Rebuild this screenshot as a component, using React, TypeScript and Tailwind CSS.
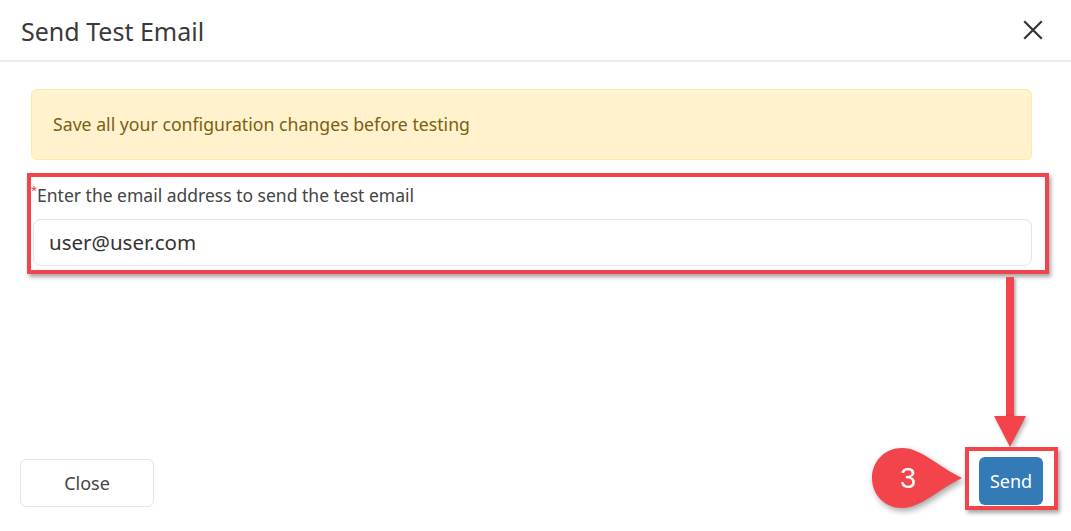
import React from 'react';

const RED = '#f2444a';

function Badge() {
    // teardrop pointing right, like the annotation callouts
    return (
        <svg width="96" height="66" viewBox="0 0 96 66" className="absolute left-[869px] top-[445px] drop-shadow-[2px_3px_3px_rgba(0,0,0,0.35)]">
            <path d="M33 3 C16 3 3 16 3 33 C3 50 16 63 33 63 C52 63 70 44 93 33 C70 22 52 3 33 3 Z" fill={RED}/>
            <text x="39" y="43" textAnchor="middle" fill="#fff" fontSize="29" fontFamily="Liberation Sans, Arial, sans-serif">3</text>
        </svg>
    );
}

export default function App() {
    return (
        <div className="relative w-[1071px] h-[531px] overflow-hidden bg-white text-[#333] font-['Noto_Sans',sans-serif]">
            <div className="flex h-[62px] items-center justify-between border-b-2 border-[#ebebeb] pl-[21px] pr-[28px]">
                <h1 className="text-[25px] leading-none pt-[2px] text-[#3a3a3a]">Send Test Email</h1>
                <button className="text-[#333]">
                    <svg width="20" height="20" viewBox="0 0 20 20" stroke="currentColor" strokeWidth="2.2" strokeLinecap="square">
                        <path d="M2 2 L18 18 M18 2 L2 18"/>
                    </svg>
                </button>
            </div>

            <div className="flex flex-col pl-[31px] pr-[39px] pt-[27px]">
                <div className="flex h-[71px] items-center rounded-md border border-[#fde9a8] bg-[#fff2cd] px-[21px] text-[17.7px] text-[#7d5f12]">
                    Save all your configuration changes before testing
                </div>

                <label className="mt-[23px] flex text-[17.5px] leading-[24px] text-[#444]">
                    <span className="text-[11px] leading-[14px] text-[#e23b3b]">*</span>
                    Enter the email address to send the test email
                </label>
                <div className="ml-[2px] mt-[12px] flex h-[47px] items-center rounded-lg border border-[#e4e4e4] px-[15px] text-[20.5px] text-[#333]">
                    user@user.com
                </div>
            </div>

            <div className="absolute bottom-[24px] left-[20px] right-[28px] flex items-end justify-between">
                <button className="h-[48px] w-[134px] rounded-md border border-[#e3e3e3] bg-white text-[18px] text-[#444]">Close</button>
                <button className="mb-[2px] h-[48px] w-[64px] rounded-md bg-[#337ab7] text-[18px] text-white">Send</button>
            </div>

            {/* annotations */}
            <div className="absolute left-[27px] top-[173px] h-[101px] w-[1022px] border-4 border-[#f2444a] shadow-[2px_3px_4px_rgba(0,0,0,0.35)]"/>
            <div className="absolute left-[1006px] top-[277px] h-[142px] w-[8px] bg-[#f2444a] shadow-[2px_2px_3px_rgba(0,0,0,0.3)]"/>
            <svg width="36" height="34" viewBox="0 0 36 34" className="absolute left-[993px] top-[415px] drop-shadow-[2px_2px_2px_rgba(0,0,0,0.3)]">
                <path d="M1 1 L33 1 L17 32 Z" fill={RED}/>
            </svg>
            <div className="absolute left-[965px] top-[447px] h-[63px] w-[93px] border-4 border-[#f2444a] shadow-[2px_3px_4px_rgba(0,0,0,0.35)]"/>
            <Badge/>
        </div>
    );
}
